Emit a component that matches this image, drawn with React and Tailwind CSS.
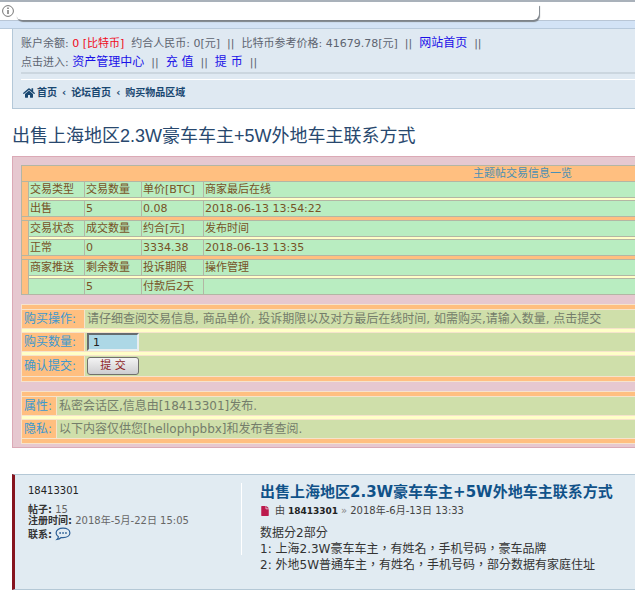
import React from "react";
import { FaHome, FaFile } from "react-icons/fa";

const ui = "font-['DejaVu_Sans','Noto_Sans_CJK_SC',sans-serif]";

function AddressBar() {
  return (
    <header className="h-[29px] border-t-2 border-b border-t-[#a9b1ba] border-b-[#b7c9dc] bg-[#d3e3f6]">
      <div className="relative flex h-[19px] items-center border-b border-[#b9c6d6] bg-white pl-[2px]">
        <svg className="size-3" viewBox="0 0 12 12" fill="none" stroke="#777" aria-label="网站信息">
          <circle cx="6" cy="6" r="5.4" />
          <path d="M6 5v4" strokeWidth="1.5" />
          <path d="M6 2.6v1.5" strokeWidth="1.5" />
        </svg>
        <div className="absolute top-[2px] left-4 h-4 w-[523px] rounded-br-md rounded-bl-md bg-white shadow-[1px_2px_1px_#7d838a]" />
      </div>
    </header>
  );
}

function NavPanel() {
  return (
    <nav className="border-b border-l border-[#b4c8d8] bg-[#dfe9f2] pb-[6px] pl-2">
      <div className="border-b-2 border-[#cbd6df] pt-[5px] text-[11px] leading-[18px] whitespace-pre text-[#5d6470]">
        <p>
          账户余额: <span className="text-[#f00820]">0 [比特币]</span>  约合人民币: 0[元]  ||  比特币参考价格: 41679.78[元]  ||{"  "}
          <a href="#site" className="text-xs leading-[18px] text-[#1a10e8]">网站首页</a>  ||
        </p>
        <p>
          点击进入: <a href="#assets" className="text-xs leading-[18px] text-[#1a10e8]">资产管理中心</a>  ||{"  "}
          <a href="#deposit" className="text-xs leading-[18px] text-[#1a10e8]">充 值</a>  ||{"  "}
          <a href="#withdraw" className="text-xs leading-[18px] text-[#1a10e8]">提 币</a>  ||
        </p>
      </div>
      <div className="mt-[5px] flex items-center gap-[2px] border-t border-white pt-1 pl-[2px] text-[10px] leading-[18px] font-bold text-[#194771]">
        <a href="#home" className="flex items-center gap-[2px]"><FaHome className="size-3" />首页</a>
        <span className="px-[3px]">‹</span>
        <a href="#board">论坛首页</a>
        <span className="px-[3px]">‹</span>
        <a href="#market">购买物品区域</a>
      </div>
    </nav>
  );
}

const trades = [
  { head: ["交易类型", "交易数量", "单价[BTC]", "商家最后在线"], body: ["出售", "5", "0.08", "2018-06-13 13:54:22"] },
  { head: ["交易状态", "成交数量", "约合[元]", "发布时间"], body: ["正常", "0", "3334.38", "2018-06-13 13:35"] },
  { head: ["商家推送", "剩余数量", "投诉期限", "操作管理"], body: ["", "5", "付款后2天", ""] },
];

const line = "border border-r-0 border-[#b3b6a4]";

function TradeTable() {
  return (
    <table className="w-full table-fixed border-collapse bg-[#ffbf80] text-[11px] leading-[14px] text-[#775226]">
      <colgroup>
        <col className="w-[7px]" />
        <col className="w-14" />
        <col className="w-[57px]" />
        <col className="w-[62px]" />
        <col />
      </colgroup>
      <thead>
        <tr className="h-4">
          <th colSpan={5} className={`${line} p-0 pl-[451px] text-left font-normal text-[#4a8fb5]`}>主题帖交易信息一览</th>
        </tr>
      </thead>
      {trades.map((t, i) => (
        <tbody key={t.head[0]}>
          {i > 0 && <tr className="h-1"><td colSpan={5} className={`${line} p-0`} /></tr>}
          <tr className="h-4">
            <td rowSpan={3} className={`${line} p-0`} />
            {t.head.map((c) => <th key={c} className={`${line} bg-[#b9edc1] p-0 pl-px text-left font-normal whitespace-nowrap`}>{c}</th>)}
          </tr>
          <tr className="h-[3px]"><td colSpan={4} className={`${line} bg-[#ffffc8] p-0`} /></tr>
          <tr className="h-4">
            {t.body.map((c, k) => <td key={k} className={`${line} bg-[#b9edc1] p-0 pl-px whitespace-nowrap`}>{c}</td>)}
          </tr>
        </tbody>
      ))}
    </table>
  );
}

const soft = "border border-r-0 border-[#f6e3cc]";

function FormTable({ rows, labelWidth }) {
  return (
    <table className="w-full table-fixed border-collapse bg-[#ffbf80] text-xs leading-4 text-[#747d6b]">
      <colgroup><col className={labelWidth} /><col /></colgroup>
      <tbody>
        <tr className="h-[5px]"><td colSpan={2} className={`${soft} p-0`} /></tr>
        {rows.map(([label, content, id], i) => (
          <React.Fragment key={label}>
            {i > 0 && <tr className="h-1"><td colSpan={2} className={`${soft} bg-[#ffffc8] p-0`} /></tr>}
            <tr className={id === "submit" ? "h-[21px]" : "h-[19px]"}>
              <th className={`${soft} p-0 pl-[2px] text-left font-normal whitespace-nowrap text-[#3d98cf]`}>
                {id ? <label htmlFor={id}>{label}</label> : label}
              </th>
              <td className={`${soft} bg-[#cfdfaa] p-0 pl-[2px] whitespace-nowrap`}>{content}</td>
            </tr>
          </React.Fragment>
        ))}
        <tr className="h-[5px]"><td colSpan={2} className={`${soft} p-0`} /></tr>
      </tbody>
    </table>
  );
}

const buyRows = [
  ["购买操作:", "请仔细查阅交易信息, 商品单价, 投诉期限以及对方最后在线时间, 如需购买,请输入数量, 点击提交"],
  [
    "购买数量:",
    <input id="qty" defaultValue="1" className="block h-[18px] w-[52px] border-2 border-t-[#666c70] border-r-[#e8eef0] border-b-[#e8eef0] border-l-[#666c70] bg-[#add8e6] px-1 text-[11px] text-[#222]" />,
    "qty",
  ],
  [
    "确认提交:",
    <button id="submit" className="block h-[18px] w-[52px] rounded-[3px] border border-[#71706c] bg-linear-to-b from-[#f4f4f4] to-[#cdcdd0] text-[11px] leading-4 text-[#8d1c1c]">提 交</button>,
    "submit",
  ],
];

const noteRows = [
  ["属性:", "私密会话区,信息由[18413301]发布."],
  ["隐私:", "以下内容仅供您[hellophpbbx]和发布者查阅."],
];

function Post() {
  return (
    <article className="mt-[26px] flex border-y border-l-[3px] border-y-[#b4c8d6] border-l-[#86141f] bg-[#e1ebf2] pt-2 pb-4">
      <aside className="h-[72px] w-[227px] shrink-0 border-r border-white pl-[13px] text-[10px] leading-[11px] text-[#666]">
        <a href="#user" className="block pt-[2px] text-[#222]">18413301</a>
        <dl className="mt-2">
          <div><dt className="inline font-bold text-[#333]">帖子:</dt> <dd className="inline">15</dd></div>
          <div><dt className="inline font-bold text-[#333]">注册时间:</dt> <dd className="inline">2018年-5月-22日 15:05</dd></div>
          <div className="mt-px flex items-center gap-[3px]">
            <dt className="font-bold text-[#333]">联系:</dt>
            <dd>
              <a href="#contact" aria-label="联系">
                <svg className="h-[14px] w-4" viewBox="0 0 16 14" fill="none" stroke="#2c5f96" strokeWidth="1.2">
                  <path d="M8 1.200c4 0 6.900 2 6.900 4.700S12 10.600 8 10.600c-.6 0-1.200 0-1.800-.1-1.200 1.200-2.700 1.900-4.200 2 .9-.8 1.300-1.700 1.400-2.800C2 8.700 1.100 7.400 1.100 5.900 1.100 3.200 4 1.200 8 1.200Z" />
                  <path d="M4.300 6h1.700M7.200 6h1.700M10.100 6h1.700" strokeWidth="1.700" />
                </svg>
              </a>
            </dd>
          </div>
        </dl>
      </aside>
      <div className="pl-[18px] whitespace-nowrap">
        <h3 className="text-[15px] leading-[18px] font-bold text-[#105289]">出售上海地区2.3W豪车车主+5W外地车主联系方式</h3>
        <p className="mt-[3px] flex items-center gap-[3px] text-[10px] leading-[14px] text-[#444]">
          <FaFile className="mr-[2px] size-[10px] text-[#bc1a4d]" />
          由 <a href="#author" className="text-[9px] font-bold text-[#222]">18413301</a> <span className="text-[#888]">»</span> 2018年-6月-13日 13:33
        </p>
        <div className="mt-[7px] font-['DejaVu_Sans','Noto_Sans_CJK_TC',sans-serif] text-xs leading-4 text-[#333]">
          <p>数据分2部分</p>
          <p>1: 上海2.3W豪车车主，有姓名，手机号码，豪车品牌</p>
          <p>2: 外地5W普通车主，有姓名，手机号码，部分数据有家庭住址</p>
        </div>
      </div>
    </article>
  );
}

export default function App() {
  return (
    <div className={`overflow-hidden bg-white ${ui}`}>
      <AddressBar />
      <main className="pl-3">
        <NavPanel />
        <h2 className="mt-[17px] mb-[9px] font-['Liberation_Sans','Noto_Sans_CJK_SC',sans-serif] text-lg leading-[21px] whitespace-nowrap text-[#28486e]">
          出售上海地区2.3W豪车车主+5W外地车主联系方式
        </h2>
        <section className="flex flex-col gap-[9px] border border-r-0 border-[#dba9b6] bg-[#e6c8d0] pt-2 pb-[3px] pl-2">
          <TradeTable />
          <FormTable rows={buyRows} labelWidth="w-[63px]" />
          <FormTable rows={noteRows} labelWidth="w-[35px]" />
        </section>
        <Post />
      </main>
    </div>
  );
}
